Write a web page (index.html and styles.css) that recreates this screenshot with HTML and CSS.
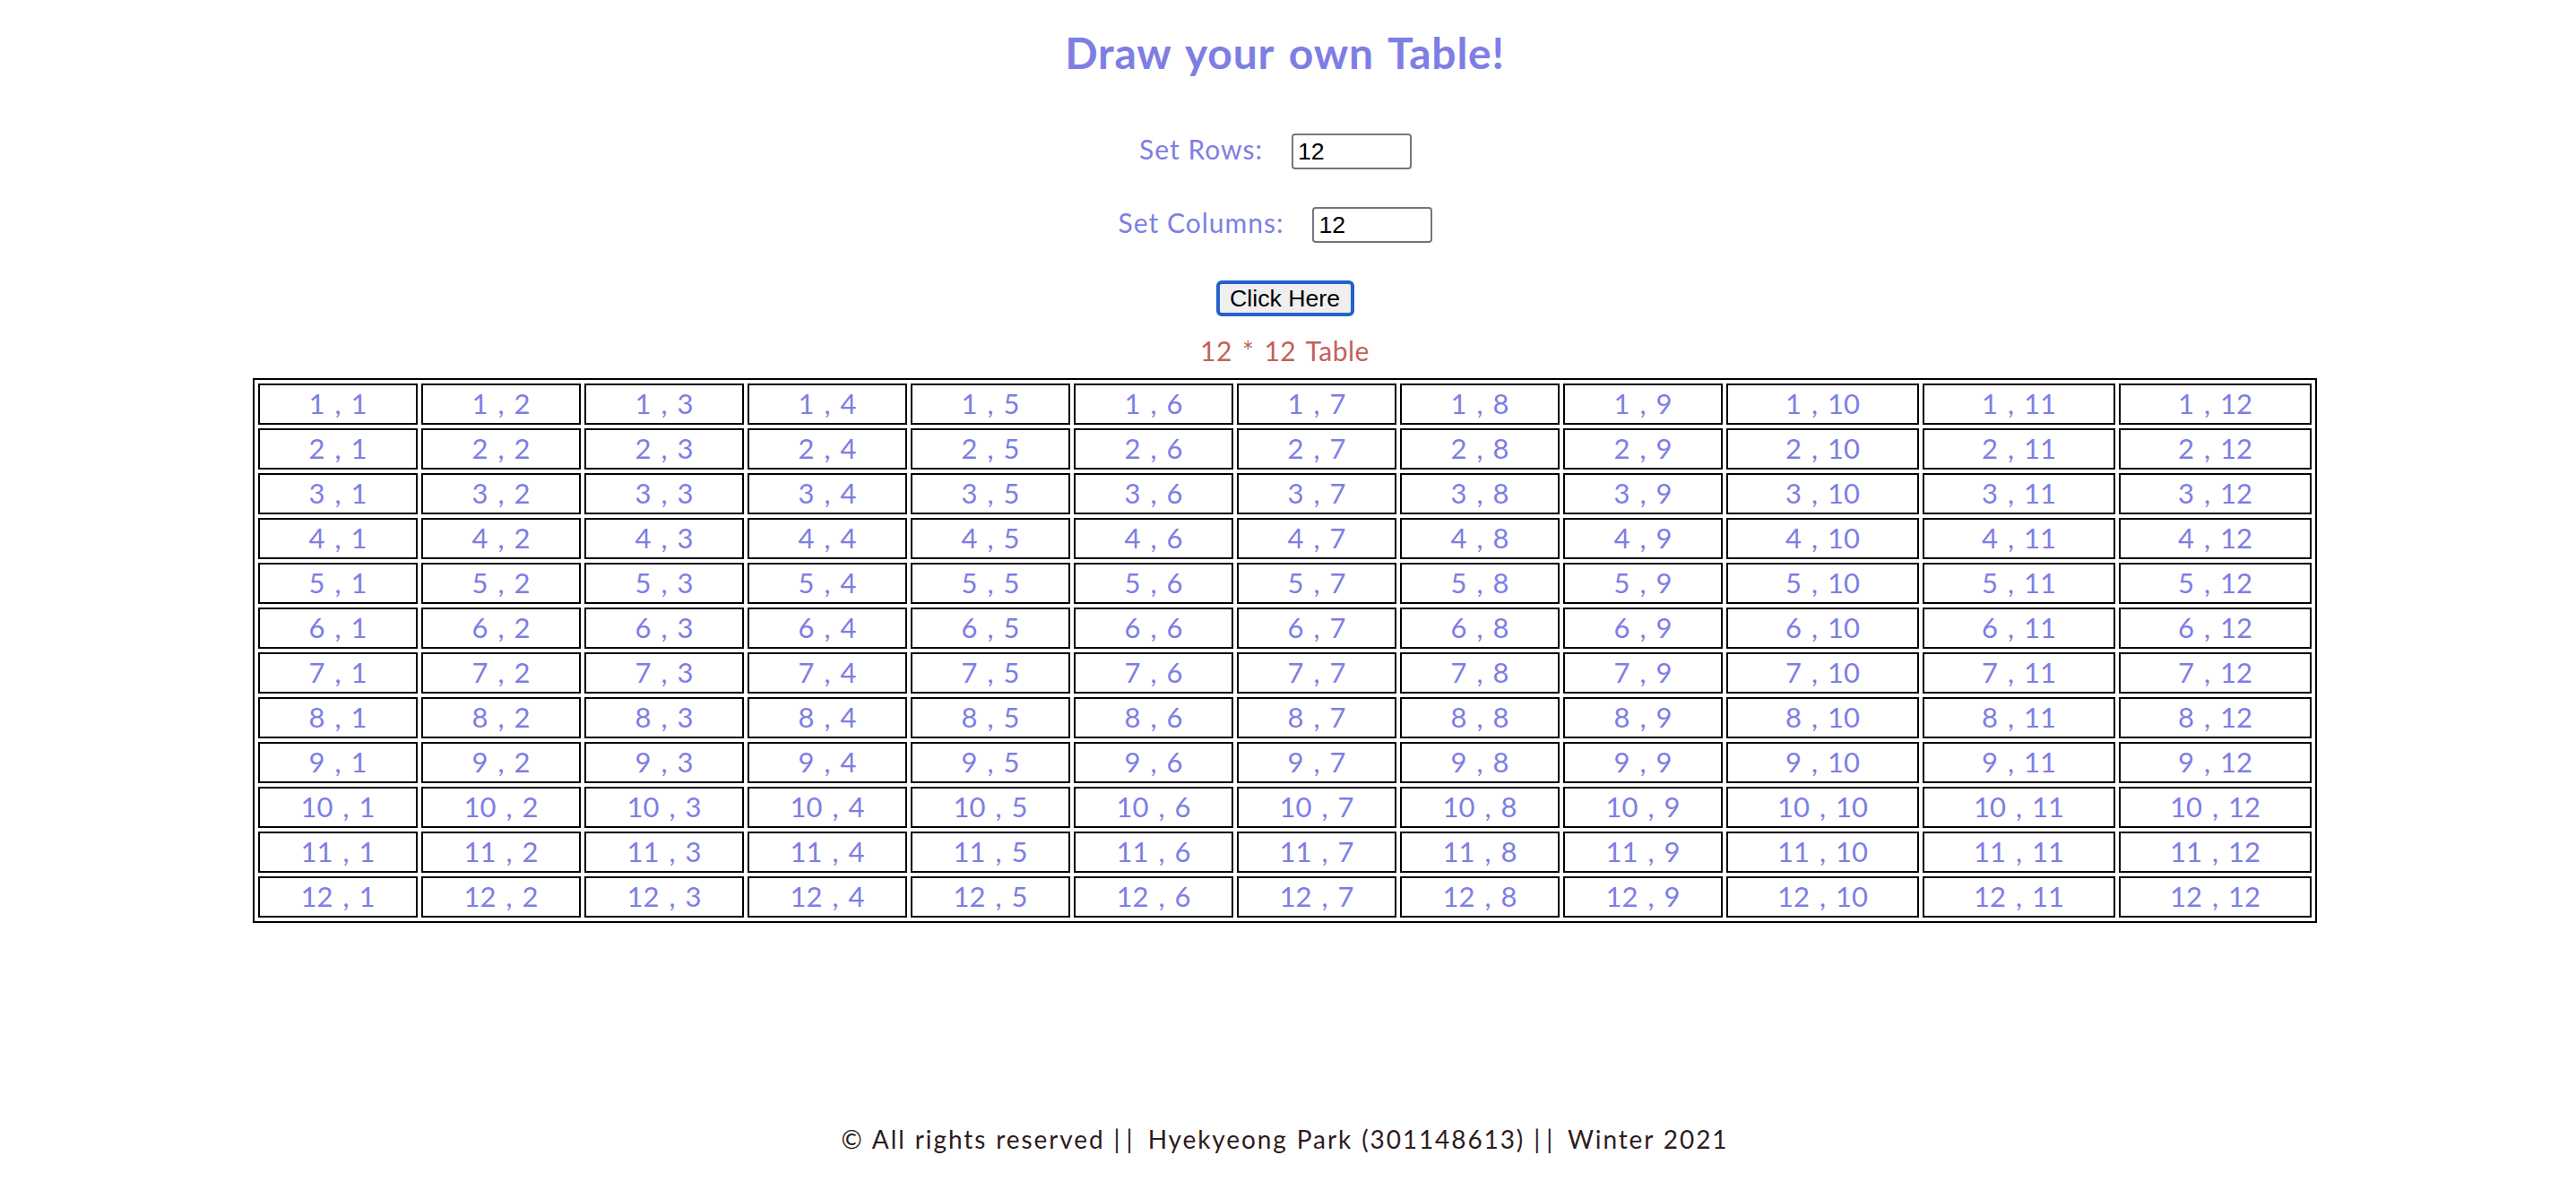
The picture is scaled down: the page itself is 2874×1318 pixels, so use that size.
FILE: index.html
```html
<!DOCTYPE html>
<html lang="en">
<head>
<meta charset="utf-8">
<title>Draw your own Table!</title>
<link rel="stylesheet" href="styles.css">
</head>
<body>
<h1 class="title">Draw your own Table!</h1>
<form class="form">
  <div class="form-row"><label class="label" for="rows">Set Rows:</label><input class="num" id="rows" type="text" value="12"></div>
  <div class="form-row"><label class="label" for="cols">Set Columns:</label><input class="num" id="cols" type="text" value="12"></div>
  <div class="btn-row"><button class="btn" type="button">Click Here</button></div>
</form>
<p class="caption">12 * 12 Table</p>
<table class="grid">
<tbody>
<tr><td>1 , 1</td><td>1 , 2</td><td>1 , 3</td><td>1 , 4</td><td>1 , 5</td><td>1 , 6</td><td>1 , 7</td><td>1 , 8</td><td>1 , 9</td><td class="wide">1 , 10</td><td class="wide">1 , 11</td><td class="wide">1 , 12</td></tr>
<tr><td>2 , 1</td><td>2 , 2</td><td>2 , 3</td><td>2 , 4</td><td>2 , 5</td><td>2 , 6</td><td>2 , 7</td><td>2 , 8</td><td>2 , 9</td><td>2 , 10</td><td>2 , 11</td><td>2 , 12</td></tr>
<tr><td>3 , 1</td><td>3 , 2</td><td>3 , 3</td><td>3 , 4</td><td>3 , 5</td><td>3 , 6</td><td>3 , 7</td><td>3 , 8</td><td>3 , 9</td><td>3 , 10</td><td>3 , 11</td><td>3 , 12</td></tr>
<tr><td>4 , 1</td><td>4 , 2</td><td>4 , 3</td><td>4 , 4</td><td>4 , 5</td><td>4 , 6</td><td>4 , 7</td><td>4 , 8</td><td>4 , 9</td><td>4 , 10</td><td>4 , 11</td><td>4 , 12</td></tr>
<tr><td>5 , 1</td><td>5 , 2</td><td>5 , 3</td><td>5 , 4</td><td>5 , 5</td><td>5 , 6</td><td>5 , 7</td><td>5 , 8</td><td>5 , 9</td><td>5 , 10</td><td>5 , 11</td><td>5 , 12</td></tr>
<tr><td>6 , 1</td><td>6 , 2</td><td>6 , 3</td><td>6 , 4</td><td>6 , 5</td><td>6 , 6</td><td>6 , 7</td><td>6 , 8</td><td>6 , 9</td><td>6 , 10</td><td>6 , 11</td><td>6 , 12</td></tr>
<tr><td>7 , 1</td><td>7 , 2</td><td>7 , 3</td><td>7 , 4</td><td>7 , 5</td><td>7 , 6</td><td>7 , 7</td><td>7 , 8</td><td>7 , 9</td><td>7 , 10</td><td>7 , 11</td><td>7 , 12</td></tr>
<tr><td>8 , 1</td><td>8 , 2</td><td>8 , 3</td><td>8 , 4</td><td>8 , 5</td><td>8 , 6</td><td>8 , 7</td><td>8 , 8</td><td>8 , 9</td><td>8 , 10</td><td>8 , 11</td><td>8 , 12</td></tr>
<tr><td>9 , 1</td><td>9 , 2</td><td>9 , 3</td><td>9 , 4</td><td>9 , 5</td><td>9 , 6</td><td>9 , 7</td><td>9 , 8</td><td>9 , 9</td><td>9 , 10</td><td>9 , 11</td><td>9 , 12</td></tr>
<tr><td>10 , 1</td><td>10 , 2</td><td>10 , 3</td><td>10 , 4</td><td>10 , 5</td><td>10 , 6</td><td>10 , 7</td><td>10 , 8</td><td>10 , 9</td><td>10 , 10</td><td>10 , 11</td><td>10 , 12</td></tr>
<tr><td>11 , 1</td><td>11 , 2</td><td>11 , 3</td><td>11 , 4</td><td>11 , 5</td><td>11 , 6</td><td>11 , 7</td><td>11 , 8</td><td>11 , 9</td><td>11 , 10</td><td>11 , 11</td><td>11 , 12</td></tr>
<tr><td>12 , 1</td><td>12 , 2</td><td>12 , 3</td><td>12 , 4</td><td>12 , 5</td><td>12 , 6</td><td>12 , 7</td><td>12 , 8</td><td>12 , 9</td><td>12 , 10</td><td>12 , 11</td><td>12 , 12</td></tr>
</tbody>
</table>
<footer class="footer">© All rights reserved <span class="pipes">||</span> Hyekyeong Park (301148613) <span class="pipes">||</span> Winter 2021</footer>
</body>
</html>
```
FILE: styles.css
```css
html, body {
  margin: 0;
  background: #ffffff;
}

body {
  padding: 30px 7px 0 0;
  font-family: Lato, "Open Sans", sans-serif;
  color: #7e7ee4;
}

.title {
  margin: 0;
  font-size: 48px;
  line-height: 58px;
  font-weight: 700;
  letter-spacing: 0.8px;
  word-spacing: 4px;
  text-align: center;
  color: #7e7ee4;
}

.form {
  margin: 61px 0 0;
  display: flex;
  flex-direction: column;
  align-items: center;
  gap: 42px;
}

.form-row {
  display: flex;
  align-items: flex-start;
  gap: 32px;
  height: 40px;
  padding-right: 21px;
}

.label {
  font-size: 30px;
  line-height: 35px;
  letter-spacing: 1px;
  color: #7e7ee4;
}

.num {
  box-sizing: border-box;
  width: 134px;
  height: 40px;
  margin: 0;
  padding: 2px 5px;
  border: 2px solid #767676;
  border-radius: 4px;
  font-family: "Liberation Sans", Arial, sans-serif;
  font-size: 26.67px;
  color: #000000;
  background: #ffffff;
  outline: none;
}

.btn-row {
  display: flex;
  justify-content: center;
}

.btn {
  box-sizing: border-box;
  width: 154px;
  height: 40px;
  margin: 0;
  padding: 0;
  border: 4px solid #2262cc;
  border-radius: 6px;
  background: #efefef;
  font-family: "Liberation Sans", Arial, sans-serif;
  font-size: 26.67px;
  line-height: 30px;
  color: #000000;
}

.caption {
  margin: 20px 0 0;
  font-size: 30px;
  line-height: 36px;
  letter-spacing: 0.5px;
  word-spacing: 3px;
  text-align: center;
  color: #c4605c;
}

.grid {
  box-sizing: border-box;
  width: 2303px;
  margin: 13px auto 0;
  table-layout: fixed;
  border: 2px solid #000000;
  border-spacing: 4px;
}

.grid td {
  box-sizing: border-box;
  width: 178px;
  height: 46px;
  padding: 1px 2px 3px;
  border: 2px solid #000000;
  font-size: 31px;
  line-height: 38px;
  word-spacing: 3px;
  text-align: center;
  color: #7e7ee4;
  white-space: nowrap;
}

.grid td.wide {
  width: 215px;
}

.footer {
  margin-top: 224px;
  font-size: 28px;
  line-height: 34px;
  letter-spacing: 1.9px;
  word-spacing: 1px;
  text-align: center;
  color: #2e1b1b;
}

.footer .pipes {
  letter-spacing: 7px;
}
```
